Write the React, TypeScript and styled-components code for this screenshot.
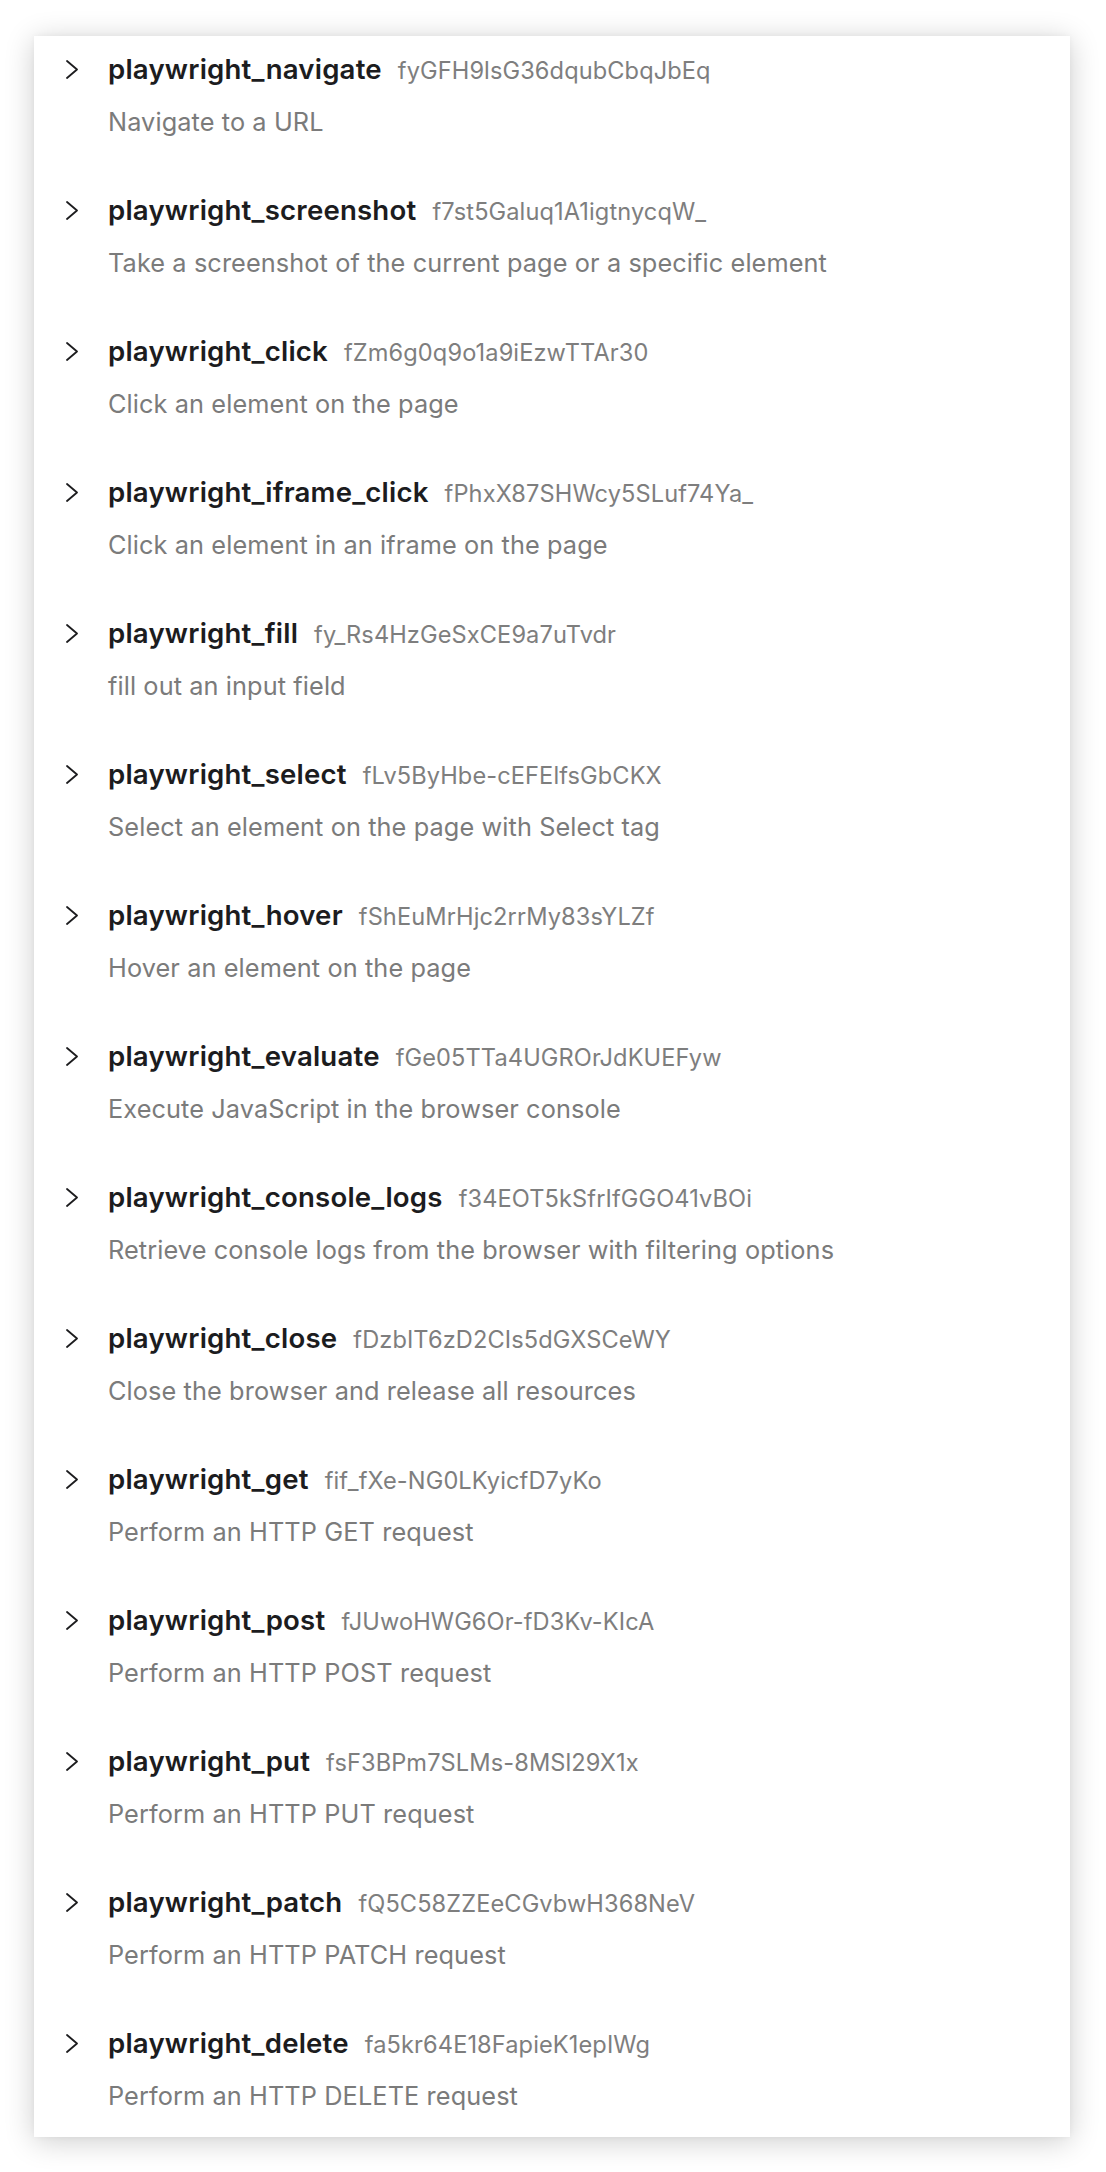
import React from "react";
import styled, { createGlobalStyle } from "styled-components";

const GlobalStyle = createGlobalStyle`
  html, body {
    margin: 0;
    padding: 0;
    background: #ffffff;
  }
  body {
    font-family: Inter, "Noto Sans", "Liberation Sans", sans-serif;
    -webkit-font-smoothing: antialiased;
  }
`;

const Page = styled.div`
  padding: 36px 36px 37px 34px;
`;

const Card = styled.ul`
  list-style: none;
  margin: 0;
  padding: 18px 0 26px 0;
  background: #ffffff;
  box-shadow: 0 4px 28px rgba(0, 0, 0, 0.2), 0 0 6px rgba(0, 0, 0, 0.04);
  display: flex;
  flex-direction: column;
  gap: 58px;
`;

const Row = styled.li`
  display: grid;
  grid-template-columns: 74px 1fr;
  row-gap: 23px;
`;

const ChevronCell = styled.div`
  display: flex;
  align-items: center;
  padding-left: 31px;
  height: 30px;
`;

const TitleLine = styled.div`
  display: flex;
  align-items: baseline;
  gap: 16px;
  height: 30px;
  line-height: 30px;
  white-space: nowrap;
`;

const Name = styled.span`
  font-size: 27.6px;
  font-weight: 600;
  color: #1c1c1e;
  letter-spacing: 0.2px;
`;

const Id = styled.span`
  font-size: 23.6px;
  font-weight: 400;
  color: #7e7e7e;
  letter-spacing: 0.1px;
`;

const Desc = styled.div`
  grid-column: 2;
  font-size: 25.3px;
  line-height: 30px;
  color: #7b7b7b;
  letter-spacing: 0.1px;
  white-space: nowrap;
`;

const Chevron = () => (
  <svg width="14" height="20" viewBox="0 0 14 20" fill="none">
    <polyline
      points="2,2 12,10.5 2,19"
      stroke="#1c1c1e"
      strokeWidth="1.8"
      strokeLinecap="round"
      strokeLinejoin="round"
    />
  </svg>
);

const tools: { name: string; id: string; desc: string }[] = [
  { name: "playwright_navigate", id: "fyGFH9lsG36dqubCbqJbEq", desc: "Navigate to a URL" },
  { name: "playwright_screenshot", id: "f7st5Galuq1A1igtnycqW_", desc: "Take a screenshot of the current page or a specific element" },
  { name: "playwright_click", id: "fZm6g0q9o1a9iEzwTTAr30", desc: "Click an element on the page" },
  { name: "playwright_iframe_click", id: "fPhxX87SHWcy5SLuf74Ya_", desc: "Click an element in an iframe on the page" },
  { name: "playwright_fill", id: "fy_Rs4HzGeSxCE9a7uTvdr", desc: "fill out an input field" },
  { name: "playwright_select", id: "fLv5ByHbe-cEFElfsGbCKX", desc: "Select an element on the page with Select tag" },
  { name: "playwright_hover", id: "fShEuMrHjc2rrMy83sYLZf", desc: "Hover an element on the page" },
  { name: "playwright_evaluate", id: "fGe05TTa4UGROrJdKUEFyw", desc: "Execute JavaScript in the browser console" },
  { name: "playwright_console_logs", id: "f34EOT5kSfrIfGGO41vBOi", desc: "Retrieve console logs from the browser with filtering options" },
  { name: "playwright_close", id: "fDzbIT6zD2CIs5dGXSCeWY", desc: "Close the browser and release all resources" },
  { name: "playwright_get", id: "fif_fXe-NG0LKyicfD7yKo", desc: "Perform an HTTP GET request" },
  { name: "playwright_post", id: "fJUwoHWG6Or-fD3Kv-KIcA", desc: "Perform an HTTP POST request" },
  { name: "playwright_put", id: "fsF3BPm7SLMs-8MSl29X1x", desc: "Perform an HTTP PUT request" },
  { name: "playwright_patch", id: "fQ5C58ZZEeCGvbwH368NeV", desc: "Perform an HTTP PATCH request" },
  { name: "playwright_delete", id: "fa5kr64E18FapieK1epIWg", desc: "Perform an HTTP DELETE request" },
];

export default function App() {
  return (
    <>
      <GlobalStyle />
      <Page>
        <Card>
          {tools.map((t) => (
            <Row key={t.name}>
              <ChevronCell>
                <Chevron />
              </ChevronCell>
              <TitleLine>
                <Name>{t.name}</Name>
                <Id>{t.id}</Id>
              </TitleLine>
              <Desc>{t.desc}</Desc>
            </Row>
          ))}
        </Card>
      </Page>
    </>
  );
}
